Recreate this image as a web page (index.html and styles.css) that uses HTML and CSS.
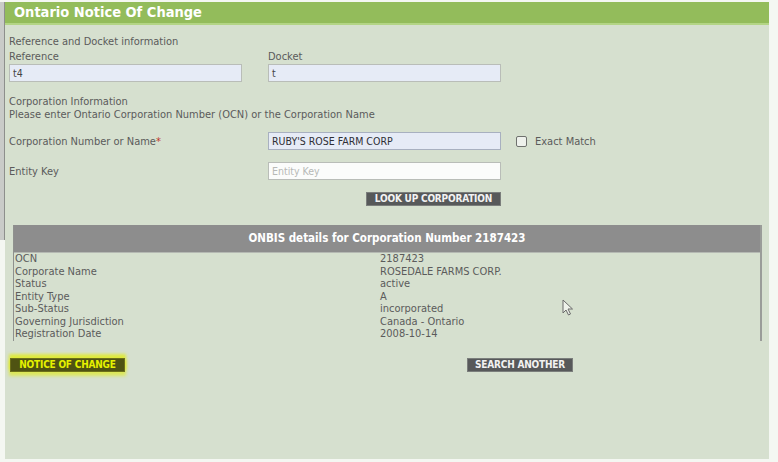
FILE: index.html
```html
<!DOCTYPE html>
<html>
<head>
<meta charset="utf-8">
<link rel="stylesheet" href="styles.css">
</head>
<body>
<div class="frame">
  <div class="edge"></div>
  <div class="panel">
    <div class="title">Ontario Notice Of Change</div>
    <div class="content">
      <div class="text">Reference and Docket information</div>
      <div class="grid2">
        <div class="field">
          <div class="text">Reference</div>
          <div class="input filled">t4</div>
        </div>
        <div class="field">
          <div class="text">Docket</div>
          <div class="input filled">t</div>
        </div>
      </div>
      <div class="text sec">Corporation Information</div>
      <div class="text">Please enter Ontario Corporation Number (OCN) or the Corporation Name</div>
      <div class="grid2 corp">
        <div class="text lbl">Corporation Number or Name<span class="req">*</span></div>
        <div class="withcheck">
          <div class="input filled dark">RUBY'S ROSE FARM CORP</div>
          <label class="check"><span class="box"></span>Exact Match</label>
        </div>
      </div>
      <div class="grid2 entity">
        <div class="text lbl">Entity Key</div>
        <div class="input white placeholder">Entity Key</div>
      </div>
      <div class="grid2 lookup">
        <div></div>
        <div class="btncol"><span class="btn">LOOK UP CORPORATION</span></div>
      </div>
      <div class="details">
        <div class="dhead">ONBIS details for Corporation Number 2187423</div>
        <div class="drows">
          <div>OCN</div><div>2187423</div>
          <div>Corporate Name</div><div>ROSEDALE FARMS CORP.</div>
          <div>Status</div><div>active</div>
          <div>Entity Type</div><div>A</div>
          <div>Sub-Status</div><div>incorporated</div>
          <div>Governing Jurisdiction</div><div>Canada - Ontario</div>
          <div>Registration Date</div><div>2008-10-14</div>
        </div>
      </div>
      <div class="actions">
        <span class="btn hl">NOTICE OF CHANGE</span>
        <span class="btn search">SEARCH ANOTHER</span>
      </div>
    </div>
    <svg class="cursor" width="12" height="17" viewBox="0 0 12 17"><path d="M1 1 L1 14 L4 11 L6.5 16 L8.5 15 L6 10 L10.5 10 Z" fill="#eef2ea" stroke="#6a6a6a" stroke-width="1" stroke-linejoin="round"/></svg>
  </div>
</div>
</body>
</html>
```
FILE: styles.css
```css
html, body {
  margin: 0;
  padding: 0;
  background: #f4f7f2;
}
body {
  font-family: "DejaVu Sans Condensed", "DejaVu Sans", sans-serif;
  font-size: 11px;
  color: #5b5b5b;
}
.frame {
  display: flex;
  height: 462px;
  padding-top: 2px;
  box-sizing: border-box;
}
.edge {
  width: 4px;
  height: 238px;
  background: #c9cbc8;
  border-right: 1px solid #8d8f8c;
  flex: none;
}
.panel {
  position: relative;
  width: 764px;
  height: 457px;
  background: #d6e0cf;
  flex: none;
}
.title {
  height: 21px;
  background: #93bc5b;
  border-bottom: 2px solid #b3d585;
  color: #fff;
  font-family: "DejaVu Sans Condensed", "DejaVu Sans", sans-serif;
  font-weight: bold;
  font-size: 14.5px;
  line-height: 21px;
  padding-left: 9px;
}
.content {
  padding: 10px 0 0 4px;
}
.text {
  line-height: 13px;
  white-space: nowrap;
}
.grid2 {
  display: grid;
  grid-template-columns: 259px 1fr;
}
.field .text {
  margin-top: 2px;
  margin-bottom: 1px;
}
.input {
  box-sizing: border-box;
  width: 233px;
  height: 18px;
  border: 1px solid #b9bdb8;
  background: #e6ebf6;
  font-size: 10.5px;
  line-height: 16px;
  padding-left: 3px;
  color: #444;
}
.input.dark { color: #2f2f35; border-color: #a8b0c0; }
.input.white { background: #fbfcfb; }
.placeholder { color: #b7b9b6; }
.sec { margin-top: 13px; }
.corp { margin-top: 11px; align-items: center; }
.withcheck { display: flex; align-items: center; }
.check {
  display: flex;
  align-items: center;
  margin-left: 15px;
  gap: 8px;
}
.box {
  width: 9px;
  height: 9px;
  border: 1px solid #6f716e;
  border-radius: 2px;
  background: #eef1ec;
}
.req { color: #c0392b; }
.entity { margin-top: 12px; align-items: center; }
.lookup { margin-top: 12px; }
.btncol { width: 233px; display: flex; justify-content: flex-end; }
.btn {
  display: inline-block;
  height: 14px;
  box-sizing: border-box;
  background: #57595a;
  border: 1px solid #7b7e7c;
  color: #f2f2f2;
  font-weight: bold;
  font-size: 10px;
  line-height: 12px;
  padding: 0 8px;
  white-space: nowrap;
  letter-spacing: -0.2px;
}
.details {
  margin-top: 19px;
  margin-left: 4px;
  width: 749px;
  box-sizing: border-box;
  border-left: 1px solid #8f918e;
  border-right: 2px solid #9a9c99;
}
.dhead {
  height: 27px;
  background: #8d8d8d;
  color: #fff;
  font-family: "DejaVu Sans Condensed", "DejaVu Sans", sans-serif;
  font-weight: bold;
  font-size: 11.5px;
  line-height: 27px;
  text-align: center;
  border-bottom: 1px solid #b5b9b3;
}
.drows {
  display: grid;
  grid-template-columns: 365px 1fr;
  line-height: 12.5px;
  padding-left: 1px;
  padding-bottom: 0;
}
.actions {
  margin-top: 17px;
  margin-left: 1px;
  display: flex;
  gap: 0;
}
.btn.hl {
  background: #4f5312;
  color: #e6f100;
  border-color: #6b6f18;
  width: 115px;
  text-align: center;
  padding: 0;
  box-shadow: 0 -3px 3px 1px rgba(226, 238, 0, 0.7), 0 3px 3px 1px rgba(226, 238, 0, 0.55);
}
.btn.search {
  margin-left: 342px;
  width: 106px;
  padding: 0;
  text-align: center;
}
.cursor {
  position: absolute;
  left: 557px;
  top: 297px;
}
```
